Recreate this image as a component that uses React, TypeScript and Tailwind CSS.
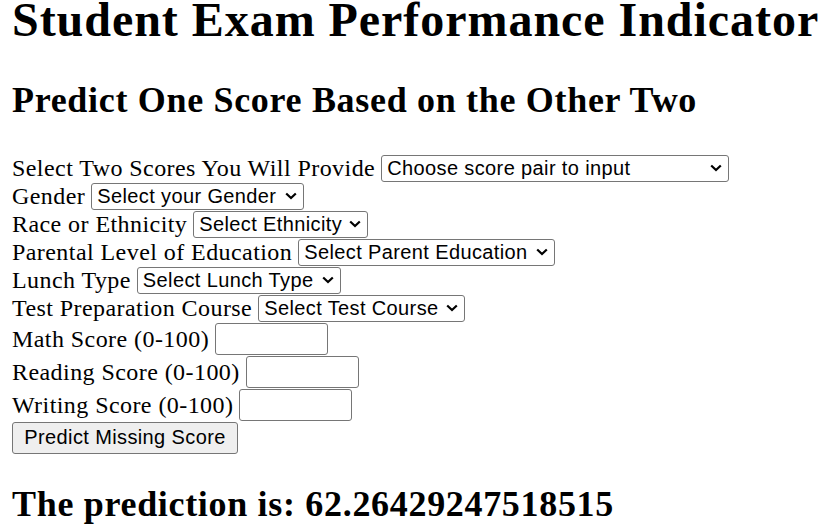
const selectRows = [
  { label: "Select Two Scores You Will Provide", placeholder: "Choose score pair to input", width: "w-[348px]" },
  { label: "Gender", placeholder: "Select your Gender", width: "w-[213px]" },
  { label: "Race or Ethnicity", placeholder: "Select Ethnicity", width: "w-[175px]" },
  { label: "Parental Level of Education", placeholder: "Select Parent Education", width: "w-[257px]" },
  { label: "Lunch Type", placeholder: "Select Lunch Type", width: "w-[204px]" },
  { label: "Test Preparation Course", placeholder: "Select Test Course", width: "w-[207px]" },
];

const scoreRows = ["Math Score (0-100)", "Reading Score (0-100)", "Writing Score (0-100)"];

const Chevron = () => (
  <svg
    className="pointer-events-none absolute right-[7px] top-1/2 -translate-y-1/2"
    width="12"
    height="8"
    viewBox="0 0 12 8"
    fill="none"
  >
    <path d="M1.2 1.5l4.8 4.6 4.8-4.6" stroke="#000" strokeWidth="2.2" />
  </svg>
);

const Select = ({ placeholder, width }: { placeholder: string; width: string }) => (
  <span className="relative inline-flex">
    <select
      defaultValue=""
      className={`${width} h-[27px] appearance-none rounded-[3px] border border-[#767676] bg-white pl-[5px] font-['Liberation_Sans',Arial,sans-serif] text-[20px] leading-[23px] tracking-[0.019em] text-black`}
    >
      <option value="" disabled>
        {placeholder}
      </option>
    </select>
    <Chevron />
  </span>
);

const App = () => {
  return (
    <div className="min-h-screen overflow-hidden bg-white px-[12px] font-['Liberation_Serif','Times_New_Roman',serif] text-[24px] tracking-[0.018em] text-black">
      <h1 className="mb-[41px] text-[48px] font-bold leading-[39px] tracking-[0.02em] whitespace-nowrap">
        Student Exam Performance Indicator
      </h1>
      <h2 className="mb-[33px] text-[36px] font-bold leading-[41px] tracking-[0.019em]">
        Predict One Score Based on the Other Two
      </h2>

      <form className="flex flex-col" onSubmit={(e) => e.preventDefault()}>
        {selectRows.map((row) => (
          <div key={row.label} className="flex h-[28px] items-center gap-[6px] leading-[28px]">
            <label>{row.label}</label>
            <Select placeholder={row.placeholder} width={row.width} />
          </div>
        ))}
        {scoreRows.map((label) => (
          <div key={label} className="flex h-[33px] items-center gap-[6px] leading-[28px]">
            <label>{label}</label>
            <input
              type="number"
              className="h-[32px] w-[113px] rounded-[3px] border border-[#767676] bg-white px-[3px] text-[20px]"
            />
          </div>
        ))}
        <div className="flex h-[33px] items-center">
          <button
            type="submit"
            className="h-[32px] w-[226px] rounded-[3px] border border-[#767676] bg-[#efefef] font-['Liberation_Sans',Arial,sans-serif] text-[20px] leading-[23px] tracking-[0.019em] text-black"
          >
            Predict Missing Score
          </button>
        </div>
      </form>

      <h2 className="mt-[30px] text-[36px] font-bold leading-[41px] tracking-[0.019em] whitespace-nowrap">
        The prediction is: 62.26429247518515
      </h2>
    </div>
  );
};

export default App;
